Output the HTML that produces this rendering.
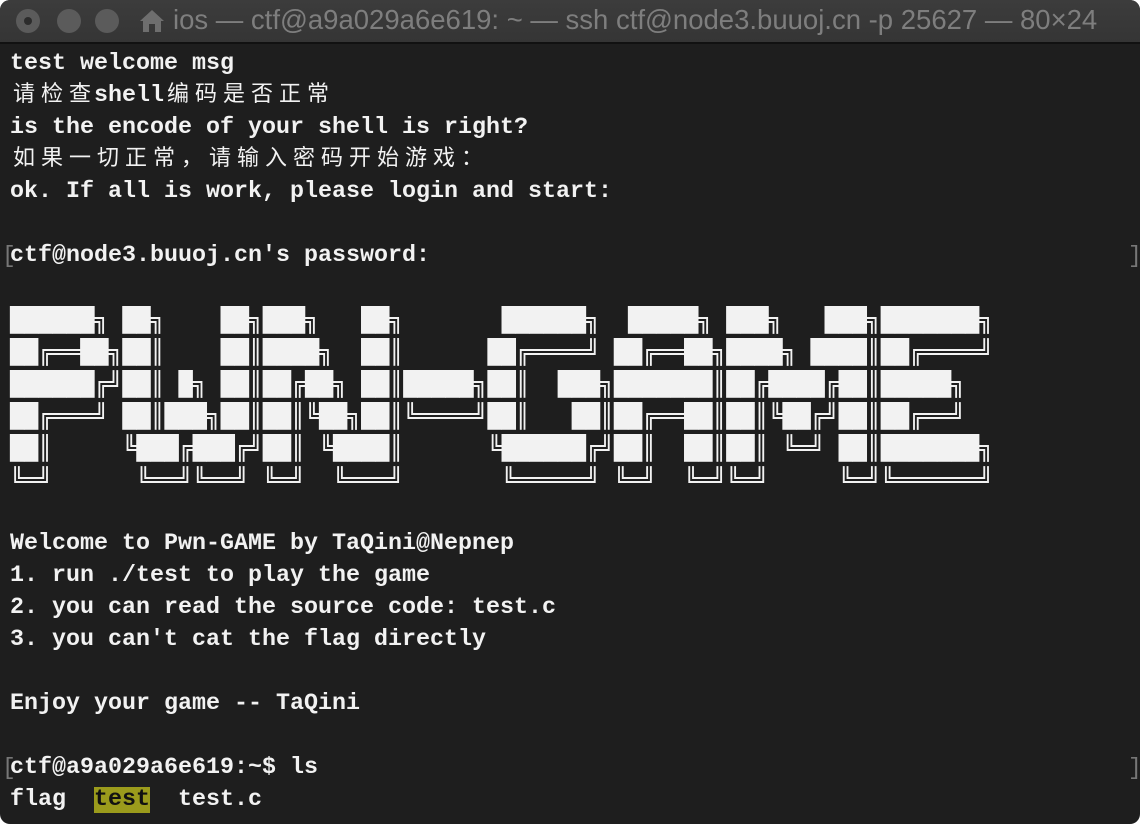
<!DOCTYPE html>
<html><head><meta charset="utf-8"><style>
html,body{margin:0;padding:0;background:#fff;}
.win{position:absolute;left:0;top:0;width:1140px;height:824px;background:#1e1e1e;border-radius:10px;overflow:hidden;}
.bar{position:absolute;left:0;top:0;width:1140px;height:42px;background:linear-gradient(#3c3c3c,#353535);border-bottom:2px solid #111;}
.dot{position:absolute;top:9px;width:24px;height:24px;border-radius:50%;background:#5b5b5b;}
.dot i{position:absolute;left:8px;top:8px;width:8px;height:8px;border-radius:50%;background:#2c2c2c;}
.title{position:absolute;left:173px;top:4px;font:27.5px "Liberation Sans",sans-serif;color:#7e7e7e;white-space:nowrap;}
.home{position:absolute;left:139px;top:9px;}
.term{position:absolute;left:10px;top:48px;font:23.33px/32px "Liberation Mono","DejaVu Sans Mono",monospace;color:#f2f2f2;white-space:pre;font-weight:bold;}
.term div{height:32px;}
.c{display:inline-block;width:28px;line-height:1;position:relative;top:0;font-family:"Noto Sans CJK SC",sans-serif;font-weight:normal;font-size:22px;text-align:center;}
.art{font-family:"DejaVu Sans Mono","Liberation Mono",monospace;font-weight:normal;}
.br{position:absolute;color:#777;font:23px/32px "Liberation Mono",monospace;}
.hl{background:#9b9b1c;color:#111;}
</style></head><body><div class="win">
<div class="bar">
<div class="dot" style="left:16px"><i></i></div>
<div class="dot" style="left:57px"></div>
<div class="dot" style="left:95px"></div>
<svg class="home" width="26" height="24" viewBox="0 0 26 24"><path d="M13 1 L1 12 L4 12 L4 23 L10 23 L10 15 L16 15 L16 23 L22 23 L22 12 L25 12 Z" fill="#6e6e6e"/></svg>
<div class="title">ios — ctf@a9a029a6e619: ~ — ssh ctf@node3.buuoj.cn -p 25627 — 80×24</div>
</div>
<div class="br" style="left:2px;top:240px">[</div><div class="br" style="left:1128px;top:240px">]</div>
<div class="br" style="left:2px;top:752px">[</div><div class="br" style="left:1128px;top:752px">]</div>
<div class="term"><div>test welcome msg</div><div><span class="c">请</span><span class="c">检</span><span class="c">查</span>shell<span class="c">编</span><span class="c">码</span><span class="c">是</span><span class="c">否</span><span class="c">正</span><span class="c">常</span></div><div>is the encode of your shell is right?</div><div><span class="c">如</span><span class="c">果</span><span class="c">一</span><span class="c">切</span><span class="c">正</span><span class="c">常</span><span class="c">，</span><span class="c">请</span><span class="c">输</span><span class="c">入</span><span class="c">密</span><span class="c">码</span><span class="c">开</span><span class="c">始</span><span class="c">游</span><span class="c">戏</span><span class="c">：</span></div><div>ok. If all is work, please login and start:</div><div></div><div>ctf@node3.buuoj.cn's password:</div><div></div><div class="art">██████╗ ██╗    ██╗███╗   ██╗       ██████╗  █████╗ ███╗   ███╗███████╗</div><div class="art">██╔══██╗██║    ██║████╗  ██║      ██╔════╝ ██╔══██╗████╗ ████║██╔════╝</div><div class="art">██████╔╝██║ █╗ ██║██╔██╗ ██║█████╗██║  ███╗███████║██╔████╔██║█████╗  </div><div class="art">██╔═══╝ ██║███╗██║██║╚██╗██║╚════╝██║   ██║██╔══██║██║╚██╔╝██║██╔══╝  </div><div class="art">██║     ╚███╔███╔╝██║ ╚████║      ╚██████╔╝██║  ██║██║ ╚═╝ ██║███████╗</div><div class="art">╚═╝      ╚══╝╚══╝ ╚═╝  ╚═══╝       ╚═════╝ ╚═╝  ╚═╝╚═╝     ╚═╝╚══════╝</div><div></div><div>Welcome to Pwn-GAME by TaQini@Nepnep</div><div>1. run ./test to play the game</div><div>2. you can read the source code: test.c</div><div>3. you can't cat the flag directly</div><div></div><div>Enjoy your game -- TaQini</div><div></div><div>ctf@a9a029a6e619:~$ ls</div><div>flag  <span class="hl">test</span>  test.c</div></div>
</div></body></html>
